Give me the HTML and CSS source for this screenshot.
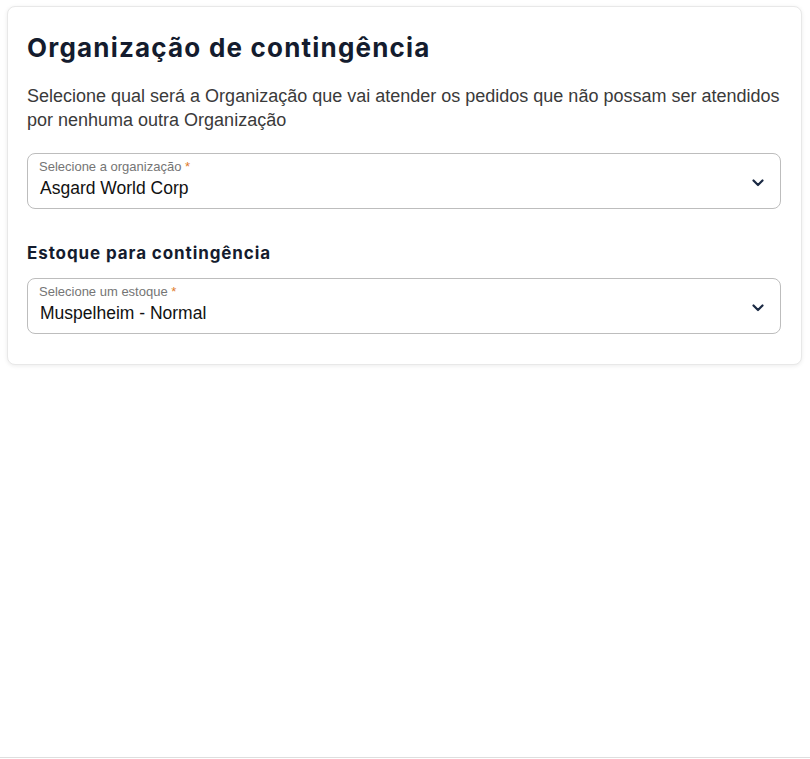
FILE: index.html
```html
<!DOCTYPE html>
<html lang="pt-BR">
<head>
<meta charset="utf-8">
<link rel="stylesheet" href="styles.css">
</head>
<body>
<main class="page">
  <section class="card">
    <h1 class="title">Organização de contingência</h1>
    <p class="desc">Selecione qual será a Organização que vai atender os pedidos que não possam ser atendidos por nenhuma outra Organização</p>
    <div class="field">
      <div class="field-text">
        <span class="label">Selecione a organização <span class="req">*</span></span>
        <span class="value">Asgard World Corp</span>
      </div>
      <svg class="chev" width="12" height="8" viewBox="0 0 12 8"><path d="M1.5 1.5 L6 6 L10.5 1.5" fill="none" stroke="#1b2a44" stroke-width="2.2" stroke-linecap="round" stroke-linejoin="round"/></svg>
    </div>
    <h2 class="subtitle">Estoque para contingência</h2>
    <div class="field">
      <div class="field-text">
        <span class="label">Selecione um estoque <span class="req">*</span></span>
        <span class="value">Muspelheim - Normal</span>
      </div>
      <svg class="chev" width="12" height="8" viewBox="0 0 12 8"><path d="M1.5 1.5 L6 6 L10.5 1.5" fill="none" stroke="#1b2a44" stroke-width="2.2" stroke-linecap="round" stroke-linejoin="round"/></svg>
    </div>
  </section>
</main>
</body>
</html>
```
FILE: styles.css
```css
html, body {
  margin: 0;
  padding: 0;
  background: #fff;
}
.page {
  height: 758px;
  border-bottom: 1px solid #dedede;
  padding: 6px 8px 0 7px;
  box-sizing: border-box;
}
.card {
  border: 1px solid #e8e8e8;
  border-radius: 8px;
  box-shadow: 0 1px 4px rgba(0,0,0,0.08);
  padding: 24px 20px 30px 19px;
  background: #fff;
}
.title {
  margin: 0;
  font-family: Inter, "Open Sans", sans-serif;
  font-weight: 700;
  font-size: 26px;
  line-height: 34px;
  color: #141c2e;
  letter-spacing: 1.2px;
}
.desc {
  margin: 19px 0 0;
  font-family: "Liberation Sans", Arial, sans-serif;
  font-size: 18px;
  line-height: 24px;
  color: #3a3a3a;
}
.field {
  margin-top: 21px;
  height: 56px;
  box-sizing: border-box;
  border: 1px solid #bdbdbd;
  border-radius: 8px;
  display: flex;
  align-items: flex-start;
  padding: 6px 16px 0 11px;
}
.field-text {
  flex: 1;
  display: flex;
  flex-direction: column;
}
.label {
  font-family: "Liberation Sans", Arial, sans-serif;
  font-size: 13px;
  line-height: 14px;
  color: #757575;
}
.req {
  color: #e07b2a;
}
.value {
  margin-top: 3px;
  font-family: "Liberation Sans", Arial, sans-serif;
  font-size: 17.5px;
  line-height: 22px;
  color: #111;
  padding-left: 1px;
}
.chev {
  display: block;
  align-self: center;
  margin-top: -2px;
}
.subtitle {
  margin: 33px 0 0;
  font-family: Inter, "Open Sans", sans-serif;
  font-weight: 700;
  font-size: 17px;
  line-height: 22px;
  color: #141c2e;
  letter-spacing: 0.9px;
}
.subtitle + .field {
  margin-top: 14px;
}
```
